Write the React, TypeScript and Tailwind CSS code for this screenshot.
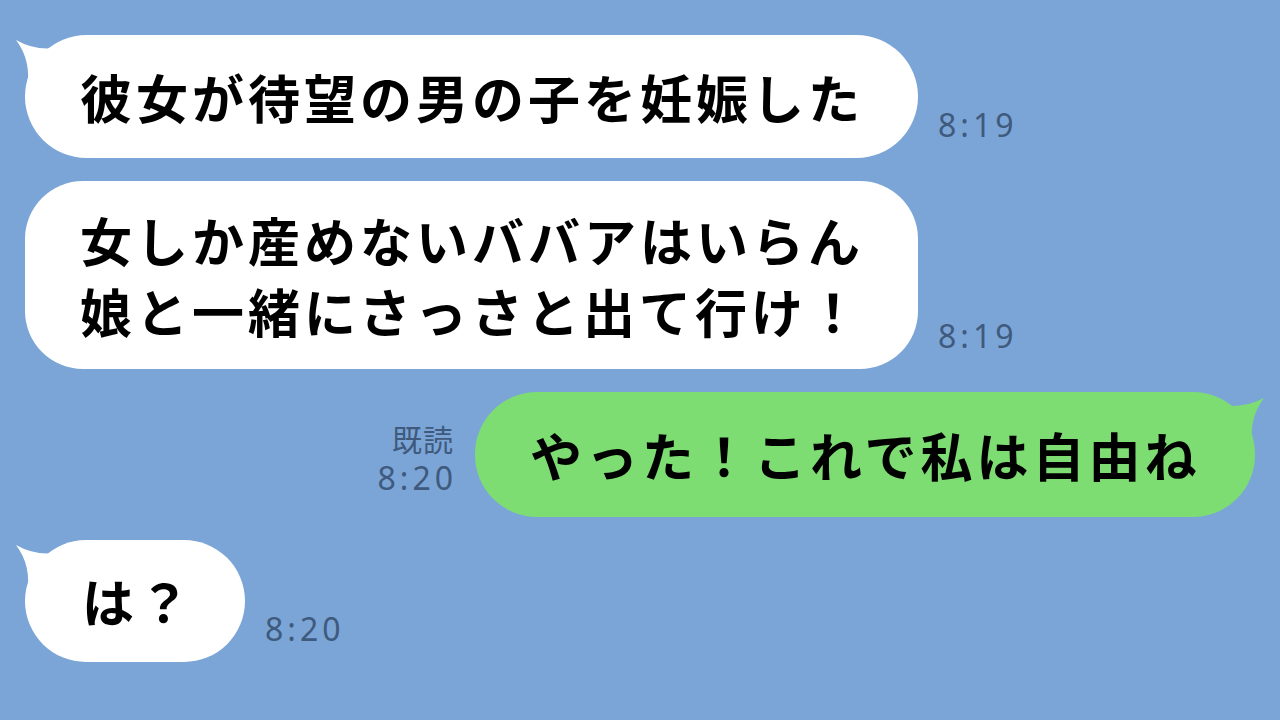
import React from 'react';

const LeftTail = () => (
  <svg className="absolute -left-[12px] top-0" width="60" height="60" viewBox="0 0 60 60">
    <path d="M3 5 Q24 17 48 12 L48 55 L14 55 Q19 26 3 5 Z" fill="#ffffff" />
  </svg>
);

const RightTail = () => (
  <svg className="absolute -right-[12px] top-0" width="60" height="60" viewBox="0 0 60 60">
    <path d="M57 6 Q36 17 12 13 L12 55 L46 55 Q41 27 57 6 Z" fill="#7ddd72" />
  </svg>
);

const Time = ({ children }: { children: React.ReactNode }) => (
  <div className="ml-[20px] mb-[16px] text-[32px] leading-[34px] tracking-[4px] text-[#3f5a7c] font-['Noto_Sans','Noto_Sans_CJK_JP',sans-serif]">
    {children}
  </div>
);

const App: React.FC = () => {
  return (
    <div className="w-[1280px] h-[720px] overflow-hidden bg-[#7ba5d7] font-['Noto_Sans_CJK_JP','Noto_Sans',sans-serif]">
      <div className="flex flex-col gap-[23px] pt-[35px] pl-[25px] pr-[25px]">
        {/* incoming 1 */}
        <div className="flex items-end">
          <div className="relative w-[893px] rounded-[62px] bg-white">
            <LeftTail />
            <div className="relative py-[26px] pl-[55px] text-[52px] leading-[71px] tracking-[4px] font-bold text-black whitespace-nowrap">
              彼女が待望の男の子を妊娠した
            </div>
          </div>
          <Time>8:19</Time>
        </div>

        {/* incoming 2 */}
        <div className="flex items-end">
          <div className="relative w-[893px] rounded-[58px] bg-white">
            <div className="relative py-[23px] pl-[55px] text-[52px] leading-[71px] tracking-[4px] font-bold text-black whitespace-nowrap">
              <div>女しか産めないババアはいらん</div>
              <div>娘と一緒にさっさと出て行け！</div>
            </div>
          </div>
          <Time>8:19</Time>
        </div>

        {/* outgoing */}
        <div className="flex items-end justify-end">
          <div className="mr-[22px] mb-[18px] flex flex-col items-end text-[#3f5a7c]">
            <div className="text-[30px] leading-[38px] tracking-[1px] mr-[-1px]">既読</div>
            <div className="text-[32px] leading-[42px] tracking-[4px] mr-[-4px] font-['Noto_Sans','Noto_Sans_CJK_JP',sans-serif]">8:20</div>
          </div>
          <div className="relative w-[780px] rounded-[62px] bg-[#7ddd72]">
            <RightTail />
            <div className="relative py-[26px] pl-[55px] text-[52px] leading-[73px] tracking-[4px] font-bold text-black whitespace-nowrap">
              やった！これで私は自由ね
            </div>
          </div>
        </div>

        {/* incoming 3 */}
        <div className="flex items-end">
          <div className="relative w-[220px] rounded-[62px] bg-white">
            <LeftTail />
            <div className="relative py-[26px] pl-[57px] text-[52px] leading-[70px] tracking-[4px] font-bold text-black whitespace-nowrap">
              は？
            </div>
          </div>
          <Time>8:20</Time>
        </div>
      </div>
    </div>
  );
};

export default App;
